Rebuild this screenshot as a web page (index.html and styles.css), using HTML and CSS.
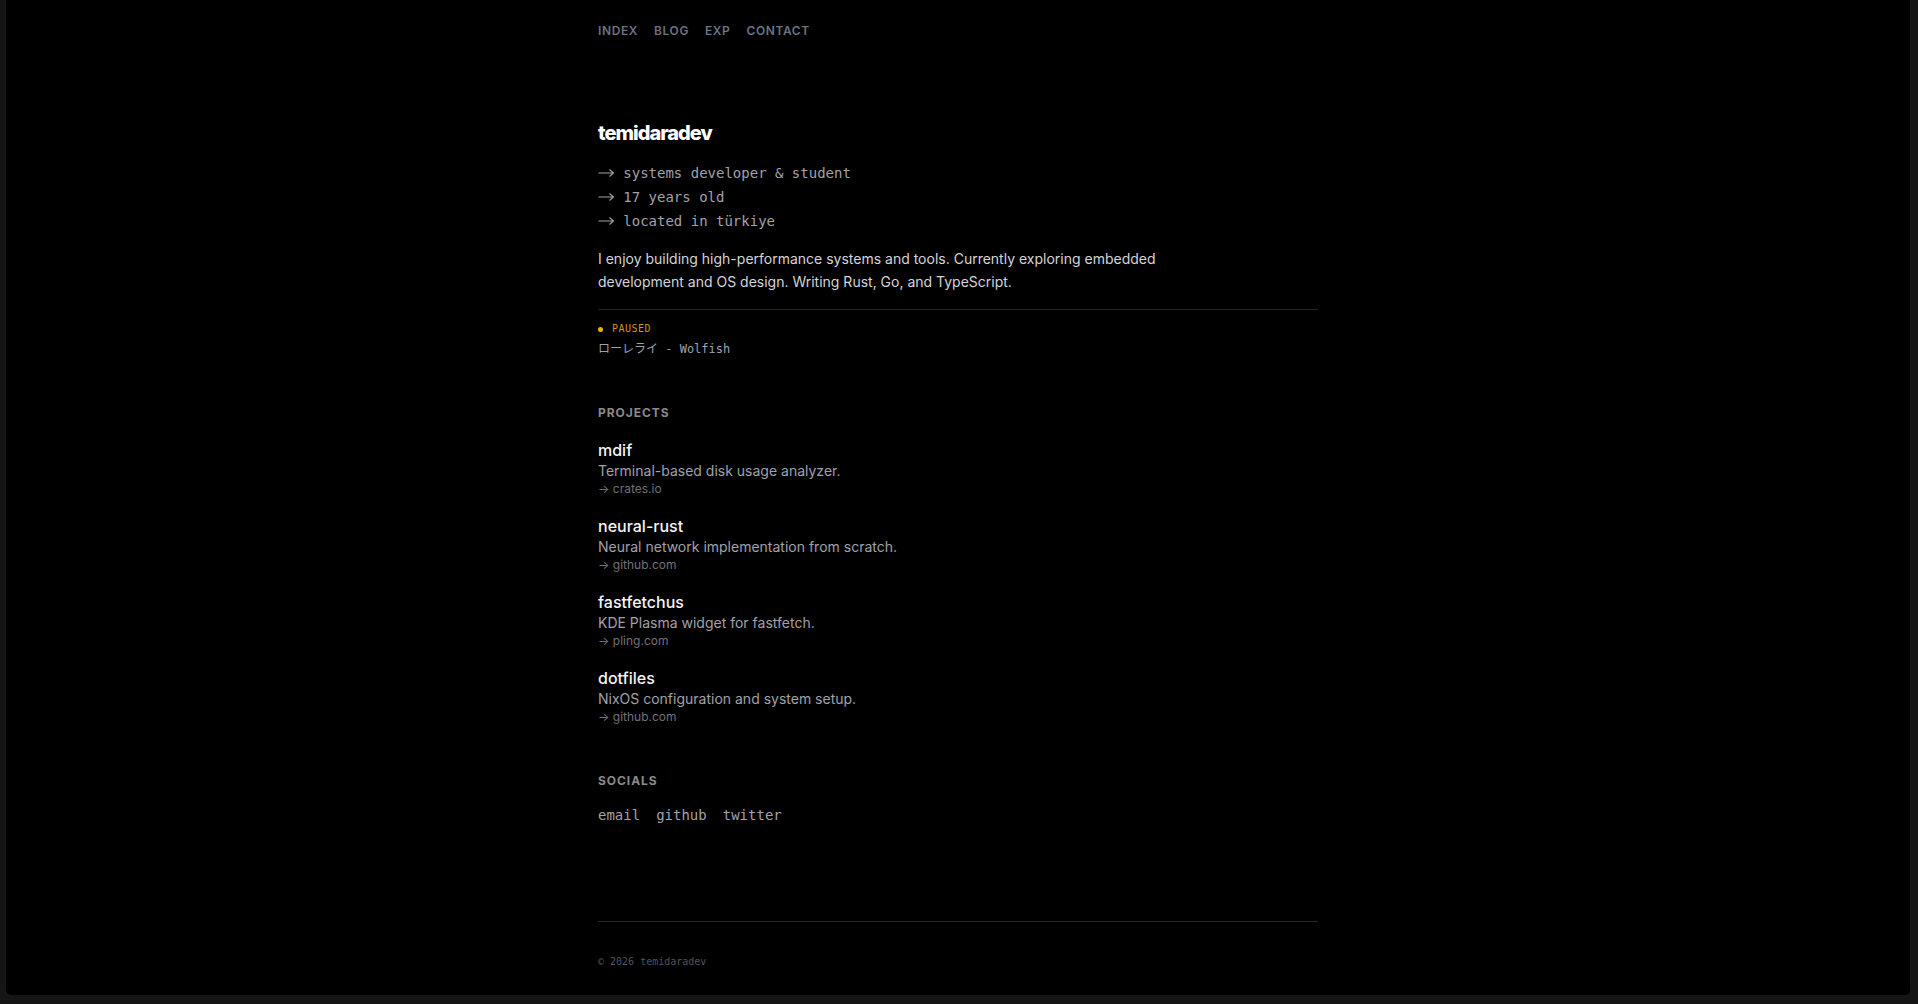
FILE: index.html
```html
<!DOCTYPE html>
<html lang="en">
<head>
<meta charset="utf-8">
<title>temidaradev</title>
<link rel="stylesheet" href="styles.css">
</head>
<body>
<div class="frame">
  <div class="container">
    <nav class="nav">
      <a href="#">Index</a>
      <a href="#">Blog</a>
      <a href="#">Exp</a>
      <a href="#">Contact</a>
    </nav>

    <header class="intro">
      <h1 class="name">temidaradev</h1>
      <ul class="facts">
        <li><span class="arrow"><svg viewBox="0 0 17 10" width="17" height="10"><path d="M0.5 5H15.5M11.5 1.5L15.5 5L11.5 8.5" fill="none" stroke="currentColor" stroke-width="1.1"/></svg></span>systems developer &amp; student</li>
        <li><span class="arrow"><svg viewBox="0 0 17 10" width="17" height="10"><path d="M0.5 5H15.5M11.5 1.5L15.5 5L11.5 8.5" fill="none" stroke="currentColor" stroke-width="1.1"/></svg></span>17 years old</li>
        <li><span class="arrow"><svg viewBox="0 0 17 10" width="17" height="10"><path d="M0.5 5H15.5M11.5 1.5L15.5 5L11.5 8.5" fill="none" stroke="currentColor" stroke-width="1.1"/></svg></span>located in türkiye</li>
      </ul>
      <p class="bio">I enjoy building high-performance systems and tools. Currently exploring embedded development and OS design. Writing Rust, Go, and TypeScript.</p>
    </header>

    <section class="playing">
      <div class="status"><span class="dot"></span>PAUSED</div>
      <div class="track">ローレライ - Wolfish</div>
    </section>

    <section class="projects">
      <h2 class="label">Projects</h2>
      <div class="project">
        <div class="p-title">mdif</div>
        <div class="p-desc">Terminal-based disk usage analyzer.</div>
        <a class="p-link" href="#">→ crates.io</a>
      </div>
      <div class="project">
        <div class="p-title">neural-rust</div>
        <div class="p-desc">Neural network implementation from scratch.</div>
        <a class="p-link" href="#">→ github.com</a>
      </div>
      <div class="project">
        <div class="p-title">fastfetchus</div>
        <div class="p-desc">KDE Plasma widget for fastfetch.</div>
        <a class="p-link" href="#">→ pling.com</a>
      </div>
      <div class="project">
        <div class="p-title">dotfiles</div>
        <div class="p-desc">NixOS configuration and system setup.</div>
        <a class="p-link" href="#">→ github.com</a>
      </div>
    </section>

    <section class="socials">
      <h2 class="label">Socials</h2>
      <div class="social-links">
        <a href="#">email</a>
        <a href="#">github</a>
        <a href="#">twitter</a>
      </div>
    </section>

    <footer class="footer">© 2026 temidaradev</footer>
  </div>
</div>
</body>
</html>
```

FILE: styles.css
```css
* { box-sizing: border-box; }
html, body { margin: 0; padding: 0; }
body {
  background: #151515;
  font-family: Inter, "Noto Sans", sans-serif;
  color: #d4d4d8;
}
a { color: inherit; text-decoration: none; }

.frame {
  background: #000;
  margin: 0 8px 0 6px;
  height: 995px;
  border-radius: 0 0 5px 5px;
  overflow: hidden;
}
.container {
  max-width: 720px;
  margin: 0 auto;
  padding-top: 21px;
}

.nav {
  display: flex;
  gap: 16px;
  font-size: 12px;
  line-height: 20px;
  font-weight: 600;
  letter-spacing: 0.05em;
  text-transform: uppercase;
  color: #6b7280;
}

.intro { margin-top: 78px; }
.name {
  margin: 0;
  font-size: 20px;
  line-height: 28px;
  font-weight: 800;
  letter-spacing: -0.05em;
  color: #fff;
}
.facts {
  list-style: none;
  margin: 14px 0 0;
  padding: 0;
  font-family: "DejaVu Sans Mono", "Liberation Mono", "Noto Sans CJK JP", monospace;
  font-size: 14px;
  line-height: 24px;
  color: #a1a1aa;
}
.facts li { display: flex; align-items: center; }
.arrow {
  display: inline-flex;
  width: 3ch;
  align-items: center;
  color: #a1a1aa;
}
.bio {
  margin: 14px 0 0;
  max-width: 600px;
  font-size: 14px;
  line-height: 23px;
  color: #d4d4d8;
}

.playing {
  margin-top: 16px;
  border-top: 1px solid #262626;
  padding-top: 12px;
}
.status {
  display: flex;
  align-items: center;
  gap: 5px;
  font-family: "DejaVu Sans Mono", "Liberation Mono", monospace;
  font-size: 10px;
  line-height: 14px;
  letter-spacing: 0.05em;
  color: #ca9a0a;
}
.dot {
  width: 5px;
  height: 5px;
  border-radius: 50%;
  background: #eab308;
  margin-right: 4px;
}
.track {
  margin-top: 4px;
  font-family: "DejaVu Sans Mono", "Noto Sans CJK JP", monospace;
  font-size: 12px;
  line-height: 18px;
  color: #9ca3af;
}

.label {
  margin: 0;
  font-size: 12px;
  line-height: 16px;
  font-weight: 700;
  letter-spacing: 0.08em;
  text-transform: uppercase;
  color: #8a8a8a;
}
.projects { margin-top: 47px; }
.projects .label { margin-bottom: 18px; }
.project { margin-bottom: 18px; }
.project:last-child { margin-bottom: 0; }
.p-title {
  font-size: 16px;
  line-height: 22px;
  font-weight: 500;
  color: #f4f4f5;
}
.p-desc {
  font-size: 14px;
  line-height: 20px;
  color: #a1a1aa;
}
.p-link {
  display: block;
  font-size: 12px;
  line-height: 16px;
  color: #71717a;
}

.socials { margin-top: 48px; }
.social-links {
  margin-top: 16px;
  display: flex;
  gap: 16px;
  font-family: "DejaVu Sans Mono", "Liberation Mono", monospace;
  font-size: 14px;
  line-height: 20px;
  color: #a1a1aa;
}

.footer {
  margin-top: 96px;
  border-top: 1px solid #262626;
  padding-top: 33px;
  font-family: "DejaVu Sans Mono", "Liberation Mono", monospace;
  font-size: 10px;
  line-height: 14px;
  color: #52525b;
}
```
